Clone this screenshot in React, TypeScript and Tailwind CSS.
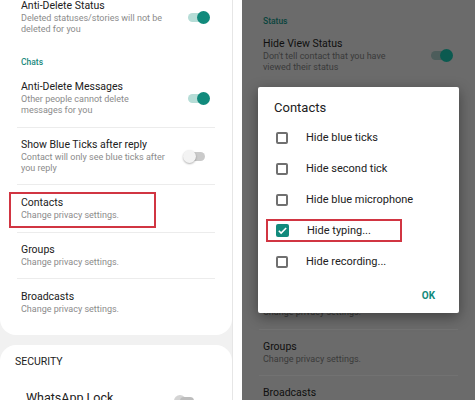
import React from 'react';

const Toggle = ({ on, dim = false, className = '' }: { on: boolean; dim?: boolean; className?: string }) => {
  if (on) {
    return (
      <div className={`relative w-[22px] h-[13px] shrink-0 ${className}`}>
        <div className={`absolute left-0 top-[2px] w-[18px] h-[9px] rounded-full ${dim ? 'bg-[#4d5d5b]' : 'bg-[#b6ddd7]'}`} />
        <div className={`absolute right-0 top-0 w-[13px] h-[13px] rounded-full ${dim ? 'bg-[#0b5a50]' : 'bg-[#118a7c]'}`} />
      </div>
    );
  }
  return (
    <div className={`relative w-[22px] h-[13px] shrink-0 ${className}`}>
      <div className="absolute right-0 top-[2px] w-[18px] h-[9px] rounded-full bg-[#cacaca]" />
      <div className="absolute left-0 top-0 w-[13px] h-[13px] rounded-full bg-[#f3f3f3] shadow-[0_1px_2px_rgba(0,0,0,0.3)]" />
    </div>
  );
};

const Row = ({
  title,
  sub,
  className = '',
  dim = false,
  children,
}: {
  title: string;
  sub: string[];
  className?: string;
  dim?: boolean;
  children?: React.ReactNode;
}) => (
  <div className={`relative flex items-center pl-[21px] ${className}`}>
    <div className="flex-1">
      <div className={`text-[10.5px] leading-[14px] ${dim ? 'text-[#0f0f0f]' : 'text-[#212121]'}`}>{title}</div>
      {sub.map((s) => (
        <div key={s} className={`text-[9px] leading-[11px] ${dim ? 'text-[#3a3a3a]' : 'text-[#8b8b8b]'}`}>
          {s}
        </div>
      ))}
    </div>
    {children}
  </div>
);

const Divider = ({ dim = false }: { dim?: boolean }) => (
  <div className={`mx-[17px] h-px ${dim ? 'bg-[#727272]' : 'bg-[#ececec]'}`} />
);

const options = [
  { label: 'Hide blue ticks', checked: false },
  { label: 'Hide second tick', checked: false },
  { label: 'Hide blue microphone', checked: false },
  { label: 'Hide typing...', checked: true },
  { label: 'Hide recording...', checked: false },
];

export default function App() {
  return (
    <div className="w-[475px] h-[400px] overflow-hidden flex bg-white font-['Roboto',sans-serif]">
      {/* left screen */}
      <div className="w-[233px] shrink-0 bg-[#f1f1f1] border-r border-[#e6e6e6] flex flex-col gap-[10px]">
        <div className="h-[335px] shrink-0 bg-white rounded-b-[16px] flex flex-col">
          <Row title="Anti-Delete Status" sub={['Deleted statuses/stories will not be', 'deleted for you']} className="-mt-px pr-[22px]">
            <Toggle on />
          </Row>
          <div className="mt-[21px] pl-[21px] text-[8.5px] leading-[12px] font-medium text-[#1b8a7d]">Chats</div>
          <Row title="Anti-Delete Messages" sub={['Other people cannot delete', 'messages for you']} className="mt-[12px] pb-[11px] pr-[22px]">
            <Toggle on />
          </Row>
          <Divider />
          <Row title="Show Blue Ticks after reply" sub={['Contact will only see blue ticks after', 'you reply']} className="pt-[10px] pb-[10px] pr-[27px]">
            <Toggle on={false} />
          </Row>
          <Divider />
          <Row title="Contacts" sub={['Change privacy settings.']} className="pt-[11px] pb-[11px]">
            <div className="absolute left-[9px] top-[7px] w-[147px] h-[36px] border-2 border-[#d13542]" />
          </Row>
          <Divider />
          <Row title="Groups" sub={['Change privacy settings.']} className="pt-[10px] pb-[10px]" />
          <Divider />
          <Row title="Broadcasts" sub={['Change privacy settings.']} className="pt-[11px]" />
        </div>
        <div className="flex-1 bg-white rounded-t-[16px] pt-[10px]">
          <div className="pl-[15px] text-[10.5px] leading-[14px] text-[#212121]">SECURITY</div>
          <div className="mt-[22px] flex items-start pl-[26px] pr-[38px]">
            <div className="flex-1 text-[12.5px] leading-[14px] text-[#212121]">WhatsApp Lock</div>
            <div className="mt-[4px] relative w-[20px] h-[12px]">
              <div className="absolute left-0 top-0 w-[12px] h-[12px] rounded-full bg-[#d4d4d4]" />
              <div className="absolute right-0 top-[2px] w-[14px] h-[8px] rounded-full bg-[#bdbdbd]" />
            </div>
          </div>
        </div>
      </div>

      <div className="w-[9px] shrink-0 bg-white" />

      {/* right screen, dimmed */}
      <div className="relative flex-1 bg-[#6b6b6b] overflow-hidden">
        <div className="flex flex-col">
          <div className="pt-[15px] pl-[21px] text-[8.5px] leading-[12px] font-medium text-[#0a443d]">Status</div>
          <Row dim title="Hide View Status" sub={["Don't tell contact that you have", 'viewed their status']} className="mt-[10px] pr-[22px]">
            <Toggle on dim />
          </Row>
          <div className="h-[208px]" />
          <Divider dim />
          <Row dim title="Contacts" sub={['Change privacy settings.']} className="pt-[11px] pb-[11px]" />
          <Divider dim />
          <Row dim title="Groups" sub={['Change privacy settings.']} className="pt-[10px] pb-[10px]" />
          <Divider dim />
          <Row dim title="Broadcasts" sub={['Change privacy settings.']} className="pt-[10px]" />
        </div>

        {/* dialog */}
        <div className="absolute left-[16px] top-[87px] w-[201px] h-[226px] bg-white rounded-[2px] shadow-[0_4px_14px_rgba(0,0,0,0.4)] flex flex-col">
          <div className="pt-[13px] pl-[16px] text-[13px] leading-[16px] text-[#212121]">Contacts</div>
          <div className="mt-[6px] flex flex-col">
            {options.map((o) => (
              <div key={o.label} className="relative h-[31px] flex items-center pl-[18px]">
                {o.checked ? (
                  <div className="w-[13px] h-[13px] rounded-[2px] bg-[#118a7c] flex items-center justify-center">
                    <svg viewBox="0 0 24 24" className="w-[11px] h-[11px]" fill="none" stroke="white" strokeWidth="3.5">
                      <path d="M4 12.5l5 5L20 6.5" />
                    </svg>
                  </div>
                ) : (
                  <div className="w-[12px] h-[12px] rounded-[2px] border-2 border-[#707070]" />
                )}
                <span className="ml-[18px] text-[11px] leading-[14px] text-[#212121]">{o.label}</span>
                {o.checked && (
                  <div className="absolute left-[8px] top-[4px] w-[136px] h-[23px] border-2 border-[#d13542]" />
                )}
              </div>
            ))}
          </div>
          <div className="mt-[13px] flex justify-end pr-[24px]">
            <span className="text-[10px] leading-[12px] font-bold text-[#118a7c]">OK</span>
          </div>
        </div>
      </div>
    </div>
  );
}
